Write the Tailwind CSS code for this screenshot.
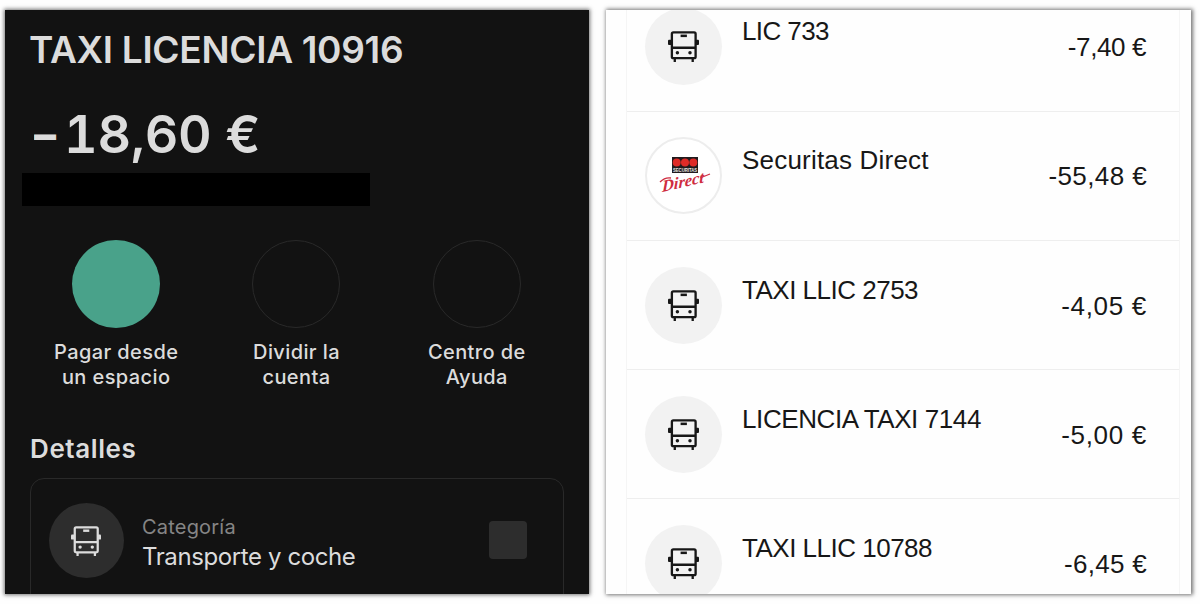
<!DOCTYPE html>
<html lang="es">
<head>
    <meta charset="UTF-8">
    <meta name="viewport" content="width=device-width, initial-scale=1.0">
    <title>Movimientos</title>
    <script src="https://cdn.jsdelivr.net/npm/@tailwindcss/browser@4"></script>
</head>
<body class="flex h-[604px] w-[1200px] gap-[17px] overflow-hidden bg-[#fefefe] pl-[5px] pt-[10px]">
    <!-- Bus icon -->
    <svg class="hidden">
        <symbol id="bus" viewBox="0 0 32 32">
            <rect x="4" y="1.500" width="24.500" height="26.500" rx="1.500" fill="none" stroke="currentColor" stroke-width="2.400" />
            <path d="M4 17.300h24.500M7 28v4M25.500 28v4" fill="none" stroke="currentColor" stroke-width="2.400" />
            <path d="M13 5h6.500" fill="none" stroke="currentColor" stroke-width="2.600" />
            <rect x="0" y="9" width="4" height="5.500" rx="1" fill="currentColor" />
            <rect x="28.500" y="9" width="3.500" height="5.500" rx="1" fill="currentColor" />
            <circle cx="9.700" cy="22.500" r="1.800" fill="currentColor" />
            <circle cx="22.700" cy="22.500" r="1.800" fill="currentColor" />
        </symbol>
    </svg>

    <!-- Transaction detail -->
    <section class="h-[584px] w-[584px] shrink-0 overflow-hidden bg-[#121212] pl-[25px] font-['Inter',sans-serif] text-[#dcdcdc] shadow-[0_0_4px_1px_rgba(0,0,0,0.55)]">
        <h1 class="-ml-px mt-[20px] h-[40px] whitespace-nowrap text-[37px] font-semibold leading-[40px] tracking-[-0.3px]">TAXI LICENCIA 10916</h1>
        <p class="mt-[35px] flex h-[60px] whitespace-nowrap pl-[4px] text-[52px] font-semibold leading-[60px]"><span class="mr-[4px] w-[26px] origin-left scale-x-[0.85]">–</span><span class="tabular-nums tracking-[-0.2px]">18,60 €</span></p>
        <div class="-ml-[8px] mt-[8px] h-[33px] w-[348px] bg-black"></div>

        <div class="-ml-[4px] mt-[34px] grid w-[541px] grid-cols-3 text-center text-[20px] font-medium leading-[25px] tracking-[0.4px]">
            <div class="flex flex-col items-center">
                <div class="mb-[12px] size-[88px] rounded-full bg-[#49a28a]"></div>
                <p>Pagar desde<br>un espacio</p>
            </div>
            <div class="flex flex-col items-center">
                <div class="mb-[12px] size-[88px] rounded-full border border-[#292929]"></div>
                <p>Dividir la<br>cuenta</p>
            </div>
            <div class="flex flex-col items-center">
                <div class="mb-[12px] size-[88px] rounded-full border border-[#292929]"></div>
                <p>Centro de<br>Ayuda</p>
            </div>
        </div>

        <h2 class="mt-[42px] h-[34px] text-[26px] font-semibold leading-[34px] tracking-[0.6px]">Detalles</h2>
        <div class="mt-[12px] flex h-[140px] w-[534px] items-start rounded-[14px] border border-[#292929] pl-[18px] pt-[24px]">
            <div class="flex size-[75px] items-center justify-center rounded-full bg-[#2d2d2d]">
                <svg class="mr-[2px] size-[30px]"><use href="#bus" /></svg>
            </div>
            <div class="ml-[18px] w-[347px] pt-[9px]">
                <p class="text-[20px] leading-[30px] tracking-[0.2px] text-[#858585]">Categoría</p>
                <p class="text-[24px] leading-[30px] tracking-[-0.4px]">Transporte y coche</p>
            </div>
            <div class="mt-[18px] size-[38px] rounded-[4px] bg-[#2d2d2d]"></div>
        </div>
    </section>

    <!-- Transaction list -->
    <section class="h-[584px] w-[585px] shrink-0 overflow-hidden bg-[#fefefe] pl-[20px] font-['Liberation_Sans',sans-serif] text-[26px] text-[#171717] shadow-[1px_0_4px_1px_rgba(0,0,0,0.55)]">
        <div class="-mt-[27.400px] w-[554px] border-x border-[#f5f5f5]">
            <div class="flex h-[129.200px] items-center border-b border-[#eeeeee] pl-[18px] pr-[33px]">
                <div class="flex size-[77px] items-center justify-center rounded-full bg-[#f2f2f2]"><svg class="size-[31px]"><use href="#bus" /></svg></div>
                <p class="ml-[20px] grow pb-[30px] tracking-[-0.6px]">LIC 733</p>
                <p class="pt-[2px] tracking-[-0.4px]">-7,40 €</p>
            </div>
            <div class="flex h-[129.200px] items-center border-b border-[#eeeeee] pl-[18px] pr-[32px]">
                <div class="size-[77px] rounded-full border-2 border-[#ededed] bg-white">
                    <svg viewBox="0 0 73 73" class="size-[73px]">
                        <rect x="25" y="18" width="26" height="16" fill="#211b1d" />
                        <g fill="#df2b27">
                            <circle cx="29.700" cy="23.500" r="4" />
                            <circle cx="38" cy="23.500" r="4" />
                            <circle cx="46.300" cy="23.500" r="4" />
                        </g>
                        <text x="26" y="32.800" textLength="24" lengthAdjust="spacingAndGlyphs" font-family="Liberation Sans" font-weight="700" font-size="5" fill="#e6e6e6">SECURITAS</text>
                        <text transform="translate(15 53) rotate(-13) skewX(-14)" textLength="43" lengthAdjust="spacingAndGlyphs" font-family="Liberation Serif" font-style="italic" font-weight="700" font-size="16" fill="#cf2c40">Direct</text>
                        <path d="M13 43q5-5 11-4M53 39l10-4" fill="none" stroke="#cf2c40" stroke-width="1.300" />
                    </svg>
                </div>
                <p class="ml-[20px] grow pb-[30px] tracking-[0.2px]">Securitas Direct</p>
                <p class="pt-[2px] tracking-[0.4px]">-55,48 €</p>
            </div>
            <div class="flex h-[129.200px] items-center border-b border-[#eeeeee] pl-[18px] pr-[32px]">
                <div class="flex size-[77px] items-center justify-center rounded-full bg-[#f2f2f2]"><svg class="size-[31px]"><use href="#bus" /></svg></div>
                <p class="ml-[20px] grow pb-[30px] tracking-[-0.5px]">TAXI LLIC 2753</p>
                <p class="pt-[2px] tracking-[0.7px]">-4,05 €</p>
            </div>
            <div class="flex h-[129.200px] items-center border-b border-[#eeeeee] pl-[18px] pr-[32px]">
                <div class="flex size-[77px] items-center justify-center rounded-full bg-[#f2f2f2]"><svg class="size-[31px]"><use href="#bus" /></svg></div>
                <p class="ml-[20px] grow pb-[30px] tracking-[-0.4px]">LICENCIA TAXI 7144</p>
                <p class="pt-[2px] tracking-[0.7px]">-5,00 €</p>
            </div>
            <div class="flex h-[129.200px] items-center pl-[18px] pr-[32px]">
                <div class="flex size-[77px] items-center justify-center rounded-full bg-[#f2f2f2]"><svg class="size-[31px]"><use href="#bus" /></svg></div>
                <p class="ml-[20px] grow pb-[30px] tracking-[-0.5px]">TAXI LLIC 10788</p>
                <p class="pt-[2px] tracking-[0.3px]">-6,45 €</p>
            </div>
        </div>
    </section>
</body>
</html>
